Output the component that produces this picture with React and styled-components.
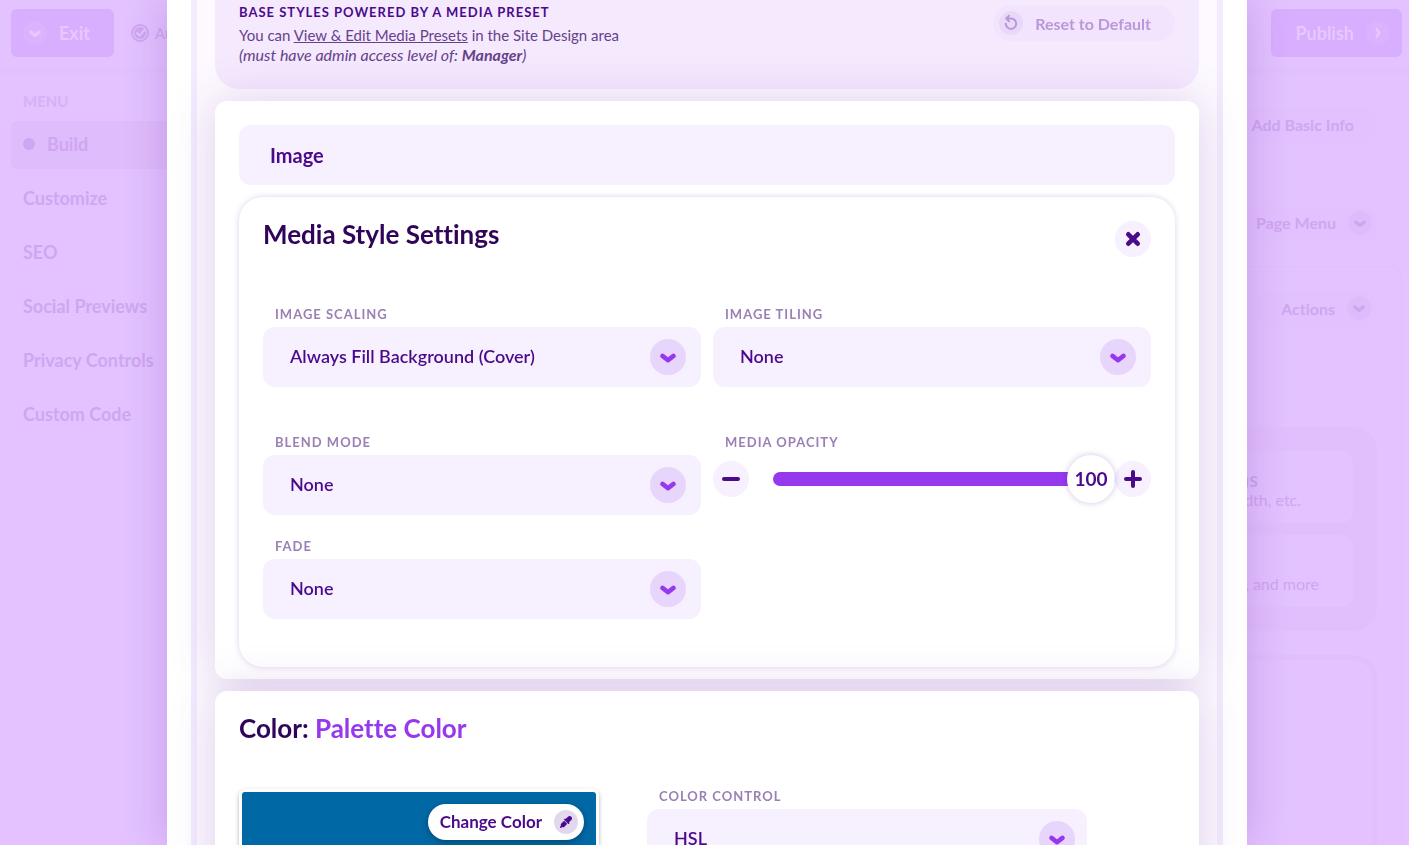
import React, { useState } from 'react';
import styled, { createGlobalStyle } from 'styled-components';

const GlobalStyle = createGlobalStyle`
  * {
    box-sizing: border-box;
  }
  body {
    margin: 0;
    overflow: hidden;
    background: #e3c2ff;
    font-family: Lato, sans-serif;
    font-variant-ligatures: none;
    color: #4b0a8c;
  }
  button, select, input {
    font-family: inherit;
    font-variant-ligatures: inherit;
    color: inherit;
    border: 0;
    margin: 0;
  }
`

/* page behind the dialog */

const Page = styled.div`
  height: 100vh;
  overflow: hidden;
  color: #cfa7f0;
`
const TopBar = styled.header`
  display: flex;
  align-items: center;
  height: 69px;
  padding: 0 7px 3px 11px;
  box-shadow: 0 0 6px #dcbafa;
`
const BarButton = styled.button`
  display: flex;
  align-items: center;
  gap: 12px;
  height: 48px;
  padding: 0 ${props => props.$end ? '12px 0 24px' : '24px 0 12px'};
  border-radius: 6px;
  background: #d8aeff;
  color: #e6c8ff;
  font-size: 18px;
  font-weight: 700;
`
const Dot = styled.span`
  display: flex;
  align-items: center;
  justify-content: center;
  flex: none;
  width: ${props => props.$size || 24}px;
  height: ${props => props.$size || 24}px;
  border-radius: 50%;
  background: ${props => props.$bg || '#dfbbfc'};
`
const Saved = styled.span`
  display: flex;
  align-items: center;
  gap: 6px;
  flex: 1;
  margin-left: 17px;
  font-size: 15px;
`
const Body = styled.div`
  display: grid;
  grid-template-columns: 240px 1fr;
`
const Nav = styled.nav`
  display: flex;
  flex-direction: column;
  gap: 6px;
  padding: 20px 0 0 11px;
`
const NavTitle = styled.div`
  height: 26px;
  padding-left: 12px;
  line-height: 24px;
  font-size: 15px;
  font-weight: 700;
  color: #d8b1f7;
`
const NavLink = styled.a`
  display: flex;
  align-items: center;
  gap: 12px;
  height: 48px;
  padding: 0 12px 2px;
  border-radius: 6px;
  background: ${props => props.$active ? '#dfbcfb' : 'none'};
  color: inherit;
  font-size: 18px;
  font-weight: 700;
  text-decoration: none;
`
const Main = styled.main`
  display: flex;
  flex-direction: column;
  margin-right: 7px;
`
const Section = styled.section`
  display: flex;
  justify-content: flex-end;
  align-items: center;
  height: ${props => props.$height}px;
  padding-right: 24px;
`
const Sheet = styled.section`
  display: flex;
  flex-direction: column;
  align-items: flex-end;
  gap: 24px;
  padding: 24px 24px 0;
  border-right: 1px solid #e1befd;
  border-top: 1px solid #e1befd;
  border-radius: 0 12px 0 0;
`
const Pill = styled.button`
  display: flex;
  align-items: center;
  gap: 12px;
  height: 36px;
  padding: 0 ${props => props.$plain ? 24 : 6}px 2px 24px;
  border-radius: 18px;
  background: #e2c1fe;
  font-size: 16px;
  font-weight: 700;
`
const Panel = styled.div`
  align-self: stretch;
  display: flex;
  flex-direction: column;
  gap: 12px;
  margin-top: 76px;
  padding: 24px;
  border-radius: 24px;
  background: #e1bffd;
`
const Tile = styled.div`
  height: 72px;
  padding: 14px ${props => props.$right}px 0;
  border-radius: 12px;
  background: #e3c2ff;
  text-align: right;
  font-size: 16px;
  line-height: 22px;
`
const TileTitle = styled.div`
  height: 24px;
  padding-right: 43px;
  font-size: 20px;
  font-weight: 700;
  line-height: 28px;
`
const Frame = styled.div`
  align-self: stretch;
  height: 300px;
  border: 5px solid #e1bffd;
  border-radius: 24px;
`

/* dialog */

const Overlay = styled.div`
  position: fixed;
  inset: 0;
  display: flex;
  padding: 0 162px 0 167px;
`
const Dialog = styled.div`
  flex: 1;
  overflow: hidden;
  padding: 0 24px;
  background: #fff;
  box-shadow: 0 0 40px rgba(90, 20, 150, 0.22);
`
const DialogBody = styled.div`
  display: flex;
  flex-direction: column;
  gap: 12px;
  min-height: 100%;
  padding: 0 18px;
  border: solid #f4ebfe;
  border-width: 0 6px;
  background: #fdf9ff;
`
const Banner = styled.section`
  display: flex;
  justify-content: space-between;
  align-items: flex-start;
  height: 89px;
  padding: 5px 24px 0;
  border-radius: 0 0 24px 24px;
  background: #f5e9fe;
`
const BannerTitle = styled.h3`
  margin: 0;
  font-size: 13px;
  font-weight: 700;
  line-height: 14px;
  letter-spacing: 1px;
`
const BannerText = styled.p`
  margin: 6px 0 0;
  color: #67418c;
  font-size: 15px;
  line-height: 20px;

  a {
    color: inherit;
  }
  em {
    font-size: 16px;
  }
`
const ResetButton = styled.button`
  display: flex;
  align-items: center;
  gap: 12px;
  height: 36px;
  padding: 0 24px 0 6px;
  border-radius: 18px;
  background: #f2e4fd;
  color: #b998d9;
  font-size: 16px;
  font-weight: 700;
`
const Card = styled.section`
  padding: 24px 24px 12px;
  border-radius: 12px;
  background: #fff;
  box-shadow: 0 0 48px rgba(75, 10, 140, 0.17);
`
const MediaType = styled.div`
  display: flex;
  align-items: center;
  height: 60px;
  padding: 0 31px;
  border-radius: 12px;
  background: #f6f0ff;
  font-size: 20px;
  font-weight: 700;
`
const Settings = styled.div`
  margin-top: 12px;
  padding: 24px 24px 48px;
  border-radius: 24px;
  background: #fff;
  box-shadow: 0 0 6px rgba(75, 10, 140, 0.18);
`
const SettingsHead = styled.div`
  display: flex;
  justify-content: space-between;
  align-items: flex-start;
  margin-bottom: 46px;
`
const Title = styled.h2`
  height: 28px;
  margin: 0;
  color: #2f0459;
  font-size: 26px;
  font-weight: 700;
  line-height: 26px;

  span {
    color: #9638ee;
  }
`
const RoundButton = styled.button`
  display: flex;
  align-items: center;
  justify-content: center;
  flex: none;
  width: 36px;
  height: 36px;
  padding: 0;
  border-radius: 50%;
  background: #f6f0ff;
`
const Fields = styled.div`
  display: grid;
  grid-template-columns: 1fr 1fr;
  gap: 20px 12px;
  margin-bottom: ${props => props.$spaced ? 44 : 0}px;
`
const Label = styled.label`
  display: block;
  height: 24px;
  padding-left: 12px;
  color: #9a80b5;
  font-size: 13px;
  font-weight: 700;
  line-height: 22px;
  letter-spacing: 1px;
`
const SelectBox = styled.div`
  position: relative;
`
const Select = styled.select`
  display: block;
  appearance: none;
  width: 100%;
  height: 60px;
  padding: 0 60px 2px 27px;
  border-radius: 12px;
  background: #f6f0ff;
  font-size: 18px;
  font-weight: 600;
`
const SelectArrow = styled(Dot)`
  position: absolute;
  top: 12px;
  right: ${props => props.$inset || 15}px;
  color: #9638ee;
  pointer-events: none;
`
const SliderRow = styled.div`
  display: flex;
  align-items: center;
`
const SliderBox = styled.div`
  position: relative;
  flex: 1;
  height: 48px;
  margin-left: 24px;
`
const Range = styled.input`
  display: block;
  appearance: none;
  width: 100%;
  height: 48px;
  background: none;

  &::-webkit-slider-runnable-track {
    height: 14px;
    border-radius: 7px;
    background: #9638ee;
  }
  &::-webkit-slider-thumb {
    appearance: none;
    width: 48px;
    height: 48px;
    margin-top: -17px;
    border-radius: 50%;
    background: #fff;
    box-shadow: 0 0 6px rgba(75, 10, 140, 0.25);
  }
`
const RangeValue = styled.output`
  position: absolute;
  top: 0;
  width: 48px;
  line-height: 48px;
  text-align: center;
  font-size: 19px;
  font-weight: 700;
  pointer-events: none;
`
const ColorRow = styled.div`
  display: grid;
  grid-template-columns: 360px 440px;
  gap: 48px;
  margin-top: 42px;
`
const Swatch = styled.div`
  display: flex;
  justify-content: flex-end;
  align-items: flex-start;
  height: 240px;
  margin-top: 4px;
  padding: 12px;
  border: 3px solid #fff;
  border-radius: 6px;
  background: #0068a4;
  box-shadow: 0 2px 4px rgba(0, 0, 0, 0.3);
`
const ChangeButton = styled.button`
  display: flex;
  align-items: center;
  gap: 12px;
  height: 36px;
  padding: 0 6px 0 12px;
  border-radius: 18px;
  background: #fff;
  box-shadow: 0 2px 6px rgba(0, 0, 0, 0.3);
  font-size: 17px;
  font-weight: 700;
  line-height: 20px;
`

const Stroke = ({ d, size = 24, width = 4 }) => (
  <svg width={size} height={size} viewBox="0 0 24 24" fill="none" stroke="currentColor"
    strokeWidth={width} strokeLinecap="round" strokeLinejoin="round" aria-hidden="true">
    <path d={d} />
  </svg>
);

const Chevron = ({ size = 24 }) => <Stroke size={size} width={4.6} d="M6.500 10.900 12 15.200 17.500 10.900" />;

const ResetIcon = () => (
  <svg width="24" height="24" viewBox="0 0 24 24" fill="none" stroke="currentColor"
    strokeWidth="2" strokeLinecap="round" strokeLinejoin="round" aria-hidden="true">
    <path d="M7.500 7.500h4.500a5.200 5.200 0 1 1-5.200 5.200M10 4.800 7.200 7.500l2.800 2.700" />
  </svg>
);

const Picker = () => (
  <svg width="12" height="12" viewBox="0 0 512 512" fill="currentColor" aria-hidden="true">
    <path d="M341.6 29.2 240.1 130.8l-9.4-9.4c-12.5-12.5-32.8-12.5-45.3 0s-12.5 32.8 0 45.3l160 160c12.5 12.5 32.8 12.5 45.3 0s12.5-32.8 0-45.3l-9.4-9.4 101.5-101.6c39-39 39-102.2 0-141.1s-102.2-39-141.1 0zM55.4 323.3c-15 15-23.4 35.4-23.4 56.6v42.4L5.4 462.2c-8.5 12.7-6.8 29.6 4 40.4s27.7 12.5 40.4 4L89.7 480h42.4c21.2 0 41.6-8.4 56.6-23.4L309.4 335.9 176.1 202.6z" />
  </svg>
);

const SelectField = ({ id, label, options, inset }) => (
  <div>
    <Label htmlFor={id}>{label}</Label>
    <SelectBox>
      <Select id={id}>
        {options.map(option => <option key={option}>{option}</option>)}
      </Select>
      <SelectArrow $size={36} $bg="#e8d5fb" $inset={inset}><Chevron /></SelectArrow>
    </SelectBox>
  </div>
);

const OpacityField = () => {
  const [value, setValue] = useState(100);
  const step = by => setValue(Math.min(100, Math.max(0, value + by)));
  return (
    <div>
      <Label htmlFor="opacity">MEDIA OPACITY</Label>
      <SliderRow>
        <RoundButton aria-label="Decrease" onClick={() => step(-1)}>
          <Stroke d="M5 12h14" />
        </RoundButton>
        <SliderBox>
          <Range id="opacity" type="range" min="0" max="100" value={value}
            onChange={e => setValue(Number(e.target.value))} />
          <RangeValue htmlFor="opacity" style={{ left: `calc((100% - 48px) * ${value / 100})` }}>
            {value}
          </RangeValue>
        </SliderBox>
        <RoundButton aria-label="Increase" onClick={() => step(1)}>
          <Stroke d="M5 12h14M12 5v14" />
        </RoundButton>
      </SliderRow>
    </div>
  );
}

const links = ['Build', 'Customize', 'SEO', 'Social Previews', 'Privacy Controls', 'Custom Code'];

const Background = () => (
  <Page>
    <TopBar>
      <BarButton><Dot $bg="#dab2fd"><Chevron size={18} /></Dot>Exit</BarButton>
      <Saved>
        <svg width="18" height="18" viewBox="0 0 18 18" fill="none" stroke="currentColor" aria-hidden="true">
          <circle cx="9" cy="9" r="8" strokeWidth="2" />
          <circle cx="9" cy="9" r="6" fill="currentColor" stroke="none" />
          <path d="M6 9l2.500 2.500L14 5.500" stroke="#e3c2ff" strokeWidth="2" strokeLinecap="round" />
        </svg>
        Autosaved
      </Saved>
      <BarButton $end>Publish<Dot $bg="#dab2fd"><Stroke size={16} d="M10 6.500 14 12 10 17.500" /></Dot></BarButton>
    </TopBar>
    <Body>
      <Nav>
        <NavTitle>MENU</NavTitle>
        {links.map((link, i) => (
          <NavLink key={link} href="#" $active={i === 0}>
            {i === 0 && <Dot $size={12} $bg="#cfa7f0" />}
            {link}
          </NavLink>
        ))}
      </Nav>
      <Main>
        <Section $height={112}><Pill $plain>Add Basic Info</Pill></Section>
        <Section $height={85}><Pill>Page Menu<Dot><Chevron size={18} /></Dot></Pill></Section>
        <Sheet>
          <Pill>Actions<Dot><Chevron size={18} /></Dot></Pill>
          <Panel>
            <Tile $right={52}><TileTitle>Options</TileTitle>Height, width, etc.</Tile>
            <Tile $right={34}><TileTitle />Style, shape, and more</Tile>
          </Panel>
          <Frame />
        </Sheet>
      </Main>
    </Body>
  </Page>
);

const App = () => (
  <>
    <GlobalStyle />
    <Background />
    <Overlay>
      <Dialog role="dialog" aria-label="Media">
        <DialogBody>
          <Banner>
            <div>
              <BannerTitle>BASE STYLES POWERED BY A MEDIA PRESET</BannerTitle>
              <BannerText>
                You can <a href="#">View &amp; Edit Media Presets</a> in the Site Design area<br />
                <em>(must have admin access level of: <b>Manager</b>)</em>
              </BannerText>
            </div>
            <ResetButton>
              <Dot $bg="#e9d8f8"><ResetIcon /></Dot>
              Reset to Default
            </ResetButton>
          </Banner>
          <Card>
            <MediaType>Image</MediaType>
            <Settings>
              <SettingsHead>
                <Title>Media Style Settings</Title>
                <RoundButton aria-label="Close"><Stroke width={4.6} d="M7.300 7.300l9.400 9.400M16.700 7.300l-9.400 9.400" /></RoundButton>
              </SettingsHead>
              <Fields $spaced>
                <SelectField id="scaling" label="IMAGE SCALING"
                  options={['Always Fill Background (Cover)', 'Fit (Contain)']} />
                <SelectField id="tiling" label="IMAGE TILING" options={['None', 'Tile']} />
              </Fields>
              <Fields>
                <SelectField id="blend" label="BLEND MODE" options={['None', 'Multiply', 'Screen']} />
                <OpacityField />
                <SelectField id="fade" label="FADE" options={['None', 'Top', 'Bottom']} />
              </Fields>
            </Settings>
          </Card>
          <Card>
            <Title>Color: <span>Palette Color</span></Title>
            <ColorRow>
              <Swatch>
                <ChangeButton>Change Color<Dot $bg="#e3d7ee"><Picker /></Dot></ChangeButton>
              </Swatch>
              <SelectField id="control" label="COLOR CONTROL" options={['HSL', 'RGB']} inset={12} />
            </ColorRow>
          </Card>
        </DialogBody>
      </Dialog>
    </Overlay>
  </>
);

export default App;
